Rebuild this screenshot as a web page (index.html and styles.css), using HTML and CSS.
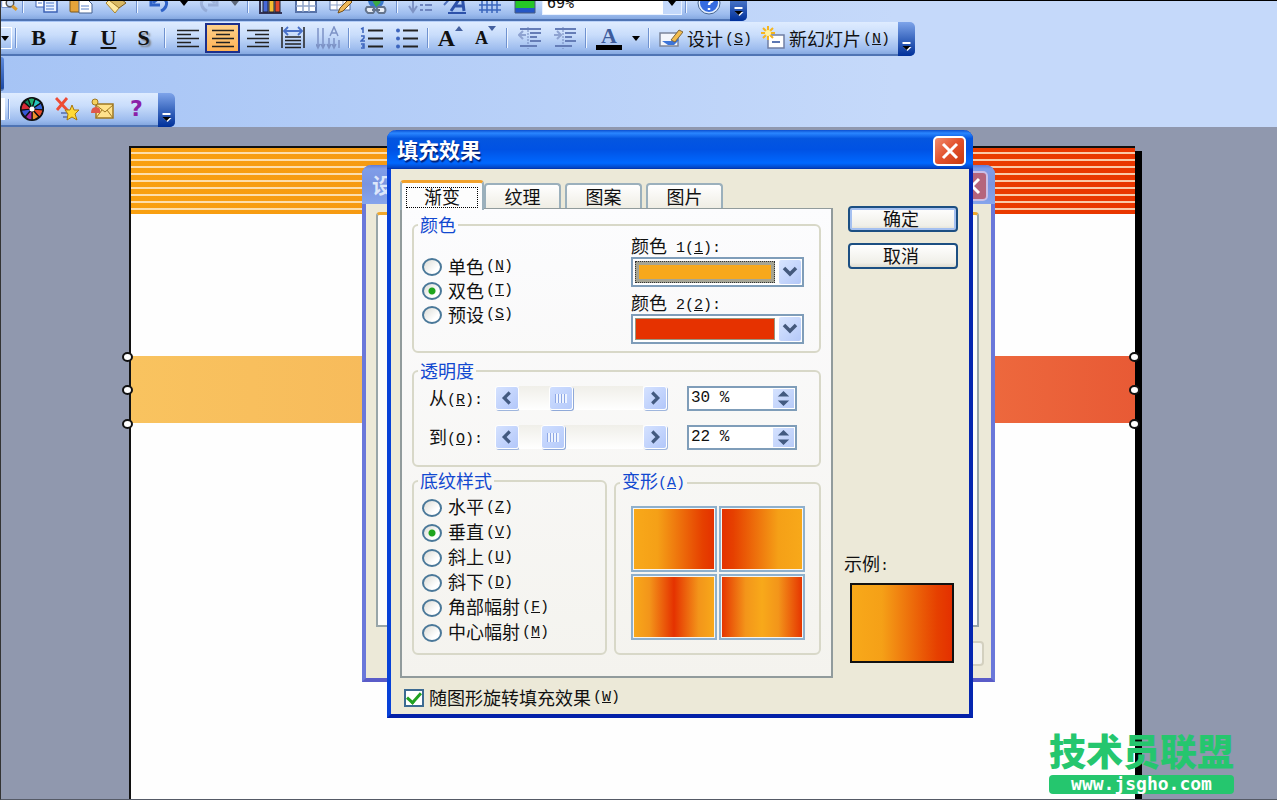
FILE: index.html
```html
<!DOCTYPE html>
<html lang="zh-CN">
<head>
<meta charset="utf-8">
<title>填充效果</title>
<link rel="stylesheet" href="styles.css">
</head>
<body>
<div class="app">
<header class="dock">
  <div class="toolbar toolbar-first">
    <button class="tool tool-short" aria-label="查找"><svg viewBox="0 0 24 24"><rect x="1" y="2" width="12" height="16" fill="#fff" stroke="#5a7cc0"/><circle cx="12" cy="12" r="5" fill="#cfe0fa" stroke="#555" stroke-width="2"/><path d="M15 16l6 5" stroke="#d99a2b" stroke-width="4"/></svg></button>
    <span class="sep"></span>
    <button class="tool" aria-label="复制"><svg viewBox="0 0 24 24"><path d="M2 2h12v14H2z" fill="#fff" stroke="#3d62b5"/><path d="M10 6h9l4 4v11H10z" fill="#e8f1ff" stroke="#3d62b5" stroke-width="1.5"/><path d="M12 12h8M12 15h8M12 18h8M4 12h4" stroke="#4a78cf"/></svg></button>
    <button class="tool" aria-label="粘贴"><svg viewBox="0 0 24 24"><rect x="1" y="2" width="17" height="19" rx="1" fill="#e6a43a" stroke="#7c5716"/><path d="M10 9h9l4 4v9H10z" fill="#fff" stroke="#45608f"/><path d="M12 15h8M12 18h8" stroke="#5d83c9"/></svg></button>
    <button class="tool" aria-label="格式刷"><svg viewBox="0 0 24 24"><path d="M11 3L22 12 15 17 4 9z" fill="#d9b965" stroke="#7c5d21"/><path d="M2 12l3-3 10 8-4 5z" fill="#ffe9a0" stroke="#a8832f"/></svg></button>
    <span class="sep"></span>
    <button class="tool" aria-label="撤消"><svg viewBox="0 0 24 24"><path d="M3 4v10h9" fill="none" stroke="#2f62c7" stroke-width="3"/><path d="M5 12C12 4 21 8 18 15q-1 3-5 5" fill="none" stroke="#2f62c7" stroke-width="3"/></svg></button>
    <button class="tool-arrow" aria-label="撤消列表"><svg viewBox="0 0 8 5"><path d="M0 0h8L4 5z"/></svg></button>
    <button class="tool faded" aria-label="恢复"><svg viewBox="0 0 24 24"><path d="M20 4v10h-9" fill="none" stroke="#7f92bd" stroke-width="3"/><path d="M18 12C11 4 2 8 5 15q1 3 5 5" fill="none" stroke="#7f92bd" stroke-width="3"/></svg></button>
    <button class="tool-arrow faded wide" aria-label="恢复列表"><svg viewBox="0 0 8 5"><path d="M0 0h8L4 5z"/></svg></button>
    <span class="sep"></span>
    <button class="tool" aria-label="图表"><svg viewBox="0 0 24 24"><path d="M1 1v21h22" fill="none" stroke="#335" stroke-width="2"/><path d="M4 9h5v12H4z" fill="#4668d8" stroke="#223"/><path d="M10 4h5v17h-5z" fill="#f5bf32" stroke="#223"/><path d="M16 8h5v13h-5z" fill="#e34a2b" stroke="#223"/></svg></button>
    <button class="tool" aria-label="表格"><svg viewBox="0 0 24 24"><path d="M2 3h20v18H2z" fill="#fff" stroke="#5772a8" stroke-width="2"/><path d="M2 9h20M2 15h20M9 3v18M15 3v18" stroke="#8fa3c8" stroke-width="1.5"/></svg></button>
    <button class="tool" aria-label="绘制表格"><svg viewBox="0 0 24 24"><path d="M1 2h20v17H1z" fill="#fff" stroke="#5772a8"/><path d="M1 9h20M1 14h20M8 2v17M14 2v17" stroke="#8fa3c8"/><path d="M9 22l2-5L20 8l3 3-9 9z" fill="#eeb95a" stroke="#775018"/></svg></button>
    <button class="tool" aria-label="超链接"><svg viewBox="0 0 24 24"><circle cx="12" cy="9" r="8" fill="#3a78ca"/><path d="M7 4q6-1 6 4l4 3-5 5-3-5z" fill="#3dab45"/><path d="M3 16h6q3 3 0 6H4q-4-3-1-6zm11 0h6q3 3 0 6h-5q-4-3-1-6z" fill="#e8edf5" stroke="#64748c" stroke-width="2"/><path d="M8 19h8" stroke="#64748c" stroke-width="2"/></svg></button>
    <span class="sep"></span>
    <button class="tool" aria-label="全部展开"><svg viewBox="0 0 24 24"><path d="M5 2v18M1 15l4 6 4-6" fill="none" stroke="#7e93c4" stroke-width="2"/><path d="M12 9h3m2 0h7M12 14h3m2 0h7M12 19h3m2 0h7" stroke="#6f86bf" stroke-width="2"/></svg></button>
    <button class="tool" aria-label="显示格式"><svg viewBox="0 0 24 24"><path d="M1 14L11 3" stroke="#5172bc" stroke-width="2"/><path d="M8 20L19 4l2 16M12 15h9" fill="none" stroke="#2d52aa" stroke-width="3"/><path d="M5 22h18" stroke="#2d52aa" stroke-width="2"/></svg></button>
    <button class="tool" aria-label="网格"><svg viewBox="0 0 24 24"><path d="M1 4h22M1 9h22M1 14h22M1 19h22M4 1v21M9 1v21M14 1v21M19 1v21" stroke="#3b66bd" stroke-width="1.5"/></svg></button>
    <button class="tool" aria-label="颜色"><svg viewBox="0 0 24 24"><path d="M2 1h20v9H2z" fill="#e02e20"/><path d="M2 8h20v9H2z" fill="#26c626"/><path d="M2 17h20v5H2z" fill="#2556c5"/><path d="M2 1h20v21H2z" fill="none" stroke="#475b80"/></svg></button>
    <div class="zoom"><input class="zoom-input" type="text" value="69%" aria-label="显示比例"><button class="zoom-arrow" aria-label="显示比例列表"><svg viewBox="0 0 8 5"><path d="M0 0h8L4 5z"/></svg></button></div>
    <span class="sep"></span>
    <button class="tool" aria-label="帮助"><svg viewBox="0 0 24 24"><circle cx="12" cy="12" r="10" fill="#356be0" stroke="#e4efff" stroke-width="2"/><circle cx="12" cy="12" r="11" fill="none" stroke="#47658f"/><path d="M8.500 9q0-4 4-4t3.500 3q0 2-2 3t-2 3m0 3v2" fill="none" stroke="#fff" stroke-width="2.500"/></svg></button>
    <button class="grip" aria-label="工具栏选项"><svg viewBox="0 0 10 9"><path d="M1 1h8" stroke="#fff" stroke-width="2"/><path d="M2 5h8L6 9z" fill="#fff"/><path d="M1 4h8L5 8z"/></svg></button>
  </div>

  <div class="toolbar">
    <button class="font-arrow" aria-label="字号列表"><svg viewBox="0 0 8 5"><path d="M0 0h8L4 5z"/></svg></button>
    <span class="sep"></span>
    <button class="tool letter bold">B</button>
    <button class="tool letter italic">I</button>
    <button class="tool letter underline">U</button>
    <button class="tool letter shadow">S</button>
    <span class="sep"></span>
    <button class="tool" aria-label="左对齐"><svg viewBox="0 0 24 24"><path d="M1 4.500h22M1 8.500h14M1 12.500h22M1 16.500h14M1 20.500h22" stroke="#222" stroke-width="1.500"/></svg></button>
    <button class="tool pressed" aria-label="居中"><svg viewBox="0 0 24 24"><path d="M1 4.500h22M5 8.500h14M1 12.500h22M5 16.500h14M1 20.500h22" stroke="#222" stroke-width="1.500"/></svg></button>
    <button class="tool" aria-label="右对齐"><svg viewBox="0 0 24 24"><path d="M1 4.500h22M9 8.500h14M1 12.500h22M9 16.500h14M1 20.500h22" stroke="#222" stroke-width="1.500"/></svg></button>
    <button class="tool" aria-label="分散对齐"><svg viewBox="0 0 24 24"><path d="M1 1v21M23 1v21M4 11h16M4 14.500h16M4 18h16M4 21.500h16" stroke="#222" stroke-width="1.500"/><path d="M3 5h18M7 1L3 5l4 4M17 1l4 4-4 4" fill="none" stroke="#4870c8" stroke-width="1.800"/></svg></button>
    <button class="tool" aria-label="文字方向"><svg viewBox="0 0 24 24"><path d="M2 2v20M7 2v20M13 12v10M18 12v10M23 14v8M0 18l2 4 2-4M5 18l2 4 2-4M11 18l2 4 2-4M16 18l2 4 2-4M14 10l4-9 4 9M15 7h6" fill="none" stroke="#7d93c6" stroke-width="1.500"/></svg></button>
    <span class="sep"></span>
    <button class="tool" aria-label="编号"><svg viewBox="0 0 24 24"><path d="M8 4.500h15M8 12.500h15M8 20.500h15" stroke="#222" stroke-width="1.800"/><path d="M1 3l2-1v5M1 10h3v2l-3 3h4M1 18h3v4H1M2 20h2" fill="none" stroke="#3c64bd" stroke-width="1.500"/></svg></button>
    <button class="tool" aria-label="项目符号"><svg viewBox="0 0 24 24"><path d="M8 4.500h15M8 12.500h15M8 20.500h15" stroke="#222" stroke-width="1.800"/><g fill="#3c64bd"><circle cx="3" cy="4.500" r="2"/><circle cx="3" cy="12.500" r="2"/><circle cx="3" cy="20.500" r="2"/></g></svg></button>
    <span class="sep"></span>
    <button class="tool letter grow">A<svg class="mark" viewBox="0 0 8 5"><path d="M0 5h8L4 0z"/></svg></button>
    <button class="tool letter shrink">A<svg class="mark" viewBox="0 0 8 5"><path d="M0 0h8L4 5z"/></svg></button>
    <span class="sep"></span>
    <button class="tool" aria-label="减少缩进"><svg viewBox="0 0 24 24"><path d="M10 1v22" stroke="#7288bd" stroke-dasharray="2 1"/><path d="M2 3h21M12 7h11M12 11h7M12 15h11M2 20h17" stroke="#657db7" stroke-width="2"/><path d="M8 9H1m4-4L1 9l4 4" fill="none" stroke="#8fa3d1" stroke-width="2"/></svg></button>
    <button class="tool" aria-label="增加缩进"><svg viewBox="0 0 24 24"><path d="M10 1v22" stroke="#7288bd" stroke-dasharray="2 1"/><path d="M2 3h21M12 7h11M12 11h7M12 15h11M2 20h17" stroke="#657db7" stroke-width="2"/><path d="M1 9h7M4 5l4 4-4 4" fill="none" stroke="#8fa3d1" stroke-width="2"/></svg></button>
    <span class="sep"></span>
    <button class="tool letter color">A</button>
    <button class="tool-arrow wide" aria-label="字体颜色列表"><svg viewBox="0 0 8 5"><path d="M0 0h8L4 5z"/></svg></button>
    <span class="sep"></span>
    <button class="command"><svg viewBox="0 0 24 24"><path d="M1 7h18v13H1z" fill="#f4f6fb" stroke="#7c859b" stroke-width="1.500"/><path d="M3 15h10l4-3 3 2-5 5H9z" fill="#3c74d8"/><path d="M12 14L20 4l4 2-8 10z" fill="#f3bd4e" stroke="#7b6540"/></svg>设计<span class="key">(<u>S</u>)</span></button>
    <button class="command"><svg viewBox="0 0 24 24"><path d="M7 9h16v13H7z" fill="#fff" stroke="#707fa4" stroke-width="1.500"/><path d="M11 16h8" stroke="#5c77b3" stroke-width="2"/><path d="M7 0v14M0 7h14M2 2l10 10M12 2L2 12" stroke="#f5b51e" stroke-width="2"/><circle cx="7" cy="7" r="3" fill="#fff2a3"/></svg>新幻灯片<span class="key">(<u>N</u>)</span></button>
    <button class="grip" aria-label="工具栏选项"><svg viewBox="0 0 10 9"><path d="M1 1h8" stroke="#fff" stroke-width="2"/><path d="M2 5h8L6 9z" fill="#fff"/><path d="M1 4h8L5 8z"/></svg></button>
  </div>

  <div class="toolbar stub"></div>

  <div class="toolbar toolbar-last">
    <span class="stub-field"></span>
    <span class="sep"></span>
    <button class="tool" aria-label="彩色轮"><svg viewBox="0 0 24 24"><circle cx="12" cy="12" r="12" fill="#111"/><g stroke="#111" stroke-width="1.200"><path d="M12 12L8 2q4-2 7 0z" fill="#20b070"/><path d="M12 12l3-10q4 1 6 4z" fill="#25c5c0"/><path d="M12 12l9-6q2 4 2 7z" fill="#3566d8"/><path d="M12 12l11 1q-1 5-4 7z" fill="#e84b28"/><path d="M12 12l7 8q-4 3-7 3z" fill="#f0912c"/><path d="M12 12v11q-4 0-7-3z" fill="#a428a0"/><path d="M12 12l-7 8q-3-3-4-7z" fill="#3658d6"/><path d="M12 12L1 13q0-5 3-8z" fill="#d72b35"/><path d="M12 12L4 5l4-3z" fill="#118c60"/></g><circle cx="12" cy="12" r="2.500" fill="#fff"/></svg></button>
    <button class="tool" aria-label="删除收藏"><svg viewBox="0 0 24 24"><path d="M1 1l12 13M12 1L2 13" stroke="#ed4b35" stroke-width="2.800"/><path d="M6 16h7M8 20h5" stroke="#6b84bd" stroke-width="2"/><path d="M17 8l2 5h5l-4 4 2 6-5-3-5 3 1-6-3-4h5z" fill="#ffda38" stroke="#a8780d"/></svg></button>
    <button class="tool" aria-label="邮件"><svg viewBox="0 0 24 24"><path d="M6 7h17v14H6z" fill="#ffe28c" stroke="#a07821" stroke-width="1.500"/><path d="M6 8l9 7 8-7M6 21l6-8M23 21l-6-8" fill="none" stroke="#a07821"/><circle cx="5" cy="5" r="3" fill="#f5d15d" stroke="#a07821"/><path d="M1 16q0-6 5-6t4 6z" fill="#df584b"/></svg></button>
    <button class="tool help">?</button>
    <button class="grip" aria-label="工具栏选项"><svg viewBox="0 0 10 9"><path d="M1 1h8" stroke="#fff" stroke-width="2"/><path d="M2 5h8L6 9z" fill="#fff"/><path d="M1 4h8L5 8z"/></svg></button>
  </div>
</header>

<main class="workspace">
  <section class="slide">
    <div class="stripes"></div>
    <div class="band">
      <i class="handle left top"></i><i class="handle left middle"></i><i class="handle left bottom"></i>
      <i class="handle right top"></i><i class="handle right middle"></i><i class="handle right bottom"></i>
    </div>
  </section>

  <section class="window back">
    <div class="titlebar"><h2 class="title">设</h2><button class="close" aria-label="关闭"><svg viewBox="0 0 20 20"><path d="M3 3l14 14M17 3L3 17"/></svg></button></div>
    <div class="back-body"><div class="back-panel"></div><div class="back-foot"><button class="back-button" aria-label="预览"></button></div></div>
  </section>

  <section class="window front">
    <div class="titlebar"><h1 class="title">填充效果</h1><button class="close" aria-label="关闭"><svg viewBox="0 0 20 20"><path d="M3 3l14 14M17 3L3 17"/></svg></button></div>
    <form class="body">
      <div class="main">
        <div class="tabs" role="tablist">
          <button type="button" class="tab active" role="tab"><span>渐变</span></button>
          <button type="button" class="tab" role="tab">纹理</button>
          <button type="button" class="tab" role="tab">图案</button>
          <button type="button" class="tab" role="tab">图片</button>
        </div>
        <div class="panel">
          <fieldset class="group colors">
            <legend>颜色</legend>
            <div class="choices">
              <label class="choice"><input type="radio" name="mode">单色<span class="key">(<u>N</u>)</span></label>
              <label class="choice"><input type="radio" name="mode" checked>双色<span class="key">(<u>T</u>)</span></label>
              <label class="choice"><input type="radio" name="mode">预设<span class="key">(<u>S</u>)</span></label>
            </div>
            <div class="pickers">
              <label for="color1">颜色<span class="key"> 1(<u>1</u>):</span></label>
              <div class="combo"><select id="color1" class="swatch amber focused"><option></option></select><svg class="chevron" viewBox="0 0 22 24"><path d="M5 8l6 6 6-6"/></svg></div>
              <label for="color2">颜色<span class="key"> 2(<u>2</u>):</span></label>
              <div class="combo"><select id="color2" class="swatch red"><option></option></select><svg class="chevron" viewBox="0 0 22 24"><path d="M5 8l6 6 6-6"/></svg></div>
            </div>
          </fieldset>

          <fieldset class="group alpha">
            <legend>透明度</legend>
            <div class="alpha-row">
              <label for="from">从<span class="key">(<u>R</u>):</span></label>
              <div class="scroll">
                <button type="button" class="step" aria-label="减少"><svg viewBox="0 0 24 24"><path d="M15 6l-6 6 6 6"/></svg></button>
                <input id="from" type="range" value="30">
                <button type="button" class="step" aria-label="增加"><svg viewBox="0 0 24 24"><path d="M9 6l6 6-6 6"/></svg></button>
              </div>
              <div class="spin"><input type="text" value="30 %" aria-label="从"><button type="button" aria-label="调整"><svg viewBox="0 0 22 20"><path d="M5 8l6-6 6 6zM5 12l6 6 6-6z"/></svg></button></div>
            </div>
            <div class="alpha-row">
              <label for="to">到<span class="key">(<u>O</u>):</span></label>
              <div class="scroll">
                <button type="button" class="step" aria-label="减少"><svg viewBox="0 0 24 24"><path d="M15 6l-6 6 6 6"/></svg></button>
                <input id="to" type="range" value="22">
                <button type="button" class="step" aria-label="增加"><svg viewBox="0 0 24 24"><path d="M9 6l6 6-6 6"/></svg></button>
              </div>
              <div class="spin"><input type="text" value="22 %" aria-label="到"><button type="button" aria-label="调整"><svg viewBox="0 0 22 20"><path d="M5 8l6-6 6 6zM5 12l6 6 6-6z"/></svg></button></div>
            </div>
          </fieldset>

          <div class="pair">
            <fieldset class="group styles">
              <legend>底纹样式</legend>
              <label class="choice"><input type="radio" name="style">水平<span class="key">(<u>Z</u>)</span></label>
              <label class="choice"><input type="radio" name="style" checked>垂直<span class="key">(<u>V</u>)</span></label>
              <label class="choice"><input type="radio" name="style">斜上<span class="key">(<u>U</u>)</span></label>
              <label class="choice"><input type="radio" name="style">斜下<span class="key">(<u>D</u>)</span></label>
              <label class="choice"><input type="radio" name="style">角部幅射<span class="key">(<u>F</u>)</span></label>
              <label class="choice"><input type="radio" name="style">中心幅射<span class="key">(<u>M</u>)</span></label>
            </fieldset>
            <fieldset class="group variants">
              <legend>变形<span class="key">(<u>A</u>)</span></legend>
              <div class="variant-grid">
                <button type="button" class="variant forward" aria-label="变形一"></button>
                <button type="button" class="variant backward" aria-label="变形二"></button>
                <button type="button" class="variant inner" aria-label="变形三"></button>
                <button type="button" class="variant outer" aria-label="变形四"></button>
              </div>
            </fieldset>
          </div>
        </div>
        <label class="rotate"><input type="checkbox" checked>随图形旋转填充效果<span class="key">(<u>W</u>)</span></label>
      </div>
      <aside class="side">
        <button type="button" class="push primary">确定</button>
        <button type="button" class="push">取消</button>
        <div class="sample"><span>示例<span class="key">:</span></span><div class="sample-box"></div></div>
      </aside>
    </form>
  </section>

  <div class="brand"><strong>技术员联盟</strong><span>www.jsgho.com</span></div>
</main>
</div>
</body>
</html>
```
FILE: styles.css
```css
* { box-sizing: border-box; }
body { margin: 0; font: 18px/20px "Noto Sans CJK SC", sans-serif; color: #111; }
button, input, select { font: inherit; color: inherit; margin: 0; padding: 0; border: 0; background: none; border-radius: 0; }
.app { min-height: 100vh; display: flex; flex-direction: column; overflow: hidden; border-top: 1px solid #000; border-left: 1px solid #333; border-bottom: 1px solid #555a66; }
.key { font-family: "Liberation Mono", monospace; font-size: 15px; line-height: 16px; vertical-align: 1px; white-space: pre; }

/* toolbars */
.dock { display: flex; flex-direction: column; align-items: flex-start; gap: 1px; overflow: hidden; background: linear-gradient(90deg, #a6c4f5, #c5d9fa 70%); }
.toolbar { display: flex; align-items: center; height: 34px; background: linear-gradient(#dfecff, #c9ddfb 40%, #9dbcee 85%, #85a8e0); border-bottom: 2px solid #4f74b4; border-radius: 0 5px 5px 0; }
.toolbar-first { margin-top: -14px; }
.toolbar-last { margin-top: 1px; }
.toolbar svg { width: 24px; height: 24px; display: block; }
.tool { width: 35px; height: 30px; display: flex; align-items: center; justify-content: center; flex: none; }
.tool-short { width: 18px; }
.pressed { background: linear-gradient(#ffd18b, #ffb255); border: 2px solid #1c2f8c; }
.sep { width: 2px; height: 20px; margin: 0 4px 0 3px; background: linear-gradient(90deg, #6f92d0 50%, #eef5ff 50%); }
.tool-arrow { width: 14px; display: flex; justify-content: center; }
.tool-arrow.wide { width: 18px; }
.toolbar .tool-arrow svg, .toolbar .zoom-arrow svg, .toolbar .font-arrow svg { width: 8px; height: 5px; }
.faded { opacity: .5; }
.zoom { display: flex; width: 140px; height: 24px; background: #fff; border: 1px solid #e8f1ff; }
.zoom-input { flex: 1; min-width: 0; padding-left: 4px; font-family: "DejaVu Sans Mono", monospace; font-size: 15px; }
.zoom-arrow { width: 18px; background: #c3d8fa; display: flex; align-items: center; justify-content: center; }
.font-arrow { width: 11px; height: 22px; border: 1px solid #fff; border-left: 0; display: flex; align-items: center; }
.letter { font: bold 22px/24px "Liberation Serif", serif; color: #111; }
.italic { font-style: italic; }
.underline { text-decoration: underline; }
.shadow { text-shadow: 2px 2px 2px #777; }
.grow { font-size: 24px; }
.shrink { font-size: 18px; }
.toolbar .mark { width: 8px; height: 5px; fill: #44609f; align-self: flex-start; margin-top: 3px; }
.color { height: 24px; width: 26px; margin: 0 5px; color: #3d5c9c; border-bottom: 5px solid #000; line-height: 18px; }
.command { display: flex; align-items: center; margin: 0 4px 0 5px; white-space: nowrap; }
.command svg { margin-right: 4px; }
.help { font: bold 22px/28px "DejaVu Sans", sans-serif; color: #8b20a8; }
.grip { align-self: stretch; width: 17px; margin: 0 0 -2px 4px; display: flex; align-items: flex-end; justify-content: center; padding-bottom: 5px; background: linear-gradient(#7ea4ea, #3b68bf 50%, #00309a); border-radius: 0 5px 5px 0; }
.toolbar .grip svg { width: 11px; height: 9px; }
.stub { width: 3px; background: linear-gradient(#5f8bdc, #1b49a5); }
.stub-field { width: 4px; height: 22px; background: #fff; }

/* slide */
.workspace { flex: 1; position: relative; display: flex; background: #9098ae; }
.slide { flex: 1; min-height: 652px; margin: 19px 142px 0 128px; border-top: 2px solid #111; border-left: 2px solid #111; background: #fefefe; box-shadow: 7px 5px 0 #000; display: flex; flex-direction: column; gap: 142px; }
.stripes { height: 66px; background: repeating-linear-gradient(transparent 0 4px, rgba(255,238,210,.8) 4px 6px, transparent 6px 7px), linear-gradient(90deg, #f9a010, #f69a12 25%, #ea3c00 85%, #e93600); }
.band { position: relative; height: 67px; background: linear-gradient(90deg, #f9c35f, #f7bb5b 24%, #ed683d 86%, #e85a35); }
.handle { position: absolute; width: 11px; height: 10px; border: 2px solid #111; border-radius: 50%; background: #fff; }
.handle.left { left: -9px; }
.handle.right { right: -5px; }
.handle.top { top: -4px; }
.handle.middle { top: 29px; }
.handle.bottom { top: 63px; }

/* windows */
.window { position: absolute; display: flex; flex-direction: column; border-radius: 9px 9px 0 0; }
.titlebar { display: flex; align-items: center; justify-content: space-between; height: 39px; margin: 0 -4px; padding: 2px 7px 0 10px; border-radius: 9px 9px 0 0; }
.title { margin: 0; padding-bottom: 4px; font-size: 21px; line-height: 28px; font-weight: 700; color: #fff; }
.close { width: 33px; height: 30px; display: flex; align-items: center; justify-content: center; border: 2px solid #fff; border-radius: 5px; background: linear-gradient(135deg, #f08d70, #e2512c 50%, #c83a10); }
.close svg { width: 20px; height: 20px; stroke: #fff; stroke-width: 3; }
.front { left: 386px; top: 3px; width: 586px; border: 4px solid #0741d8; border-top: 0; border-right-color: #0526b0; border-bottom-color: #0320a8; background: #ece9d8; }
.front .titlebar { background: linear-gradient(#0b4fd0, #2a86ff 8%, #0456e0 22%, #0052e4 50%, #0068ff 85%, #0347c8 96%, #0030a8); }
.front .title { text-shadow: 1px 2px 1px #00227a; }
.back { left: 361px; top: 38px; width: 633px; height: 517px; border: 4px solid #6a78da; border-top: 0; border-bottom-color: #5a5cc8; background: #ece9d8; }
.back .titlebar { background: linear-gradient(#5f7bd8, #7f9de8 10%, #7a94e0 50%, #86a5ec); }
.back .title { color: #dce6fa; }
.back .close { background: #b5657c; border-color: #cbbfe6; }
.back-body { flex: 1; display: flex; flex-direction: column; padding: 8px 12px 9px 10px; }
.back-panel { flex: 1; background: #fcfcfb; border: 2px solid #98a5a8; border-top: 3px solid #f0a82c; border-radius: 4px 4px 0 0; }
.back-foot { height: 42px; display: flex; justify-content: flex-end; align-items: flex-end; }
.back-button { width: 90px; height: 25px; margin: 0 -5px 3px 0; background: #f4f3ec; border: 2px solid #d3d0bf; border-radius: 4px; }

.body { display: flex; gap: 15px; padding: 11px 11px 4px 9px; }
.main { flex: 1; min-width: 0; }
.tabs { display: flex; align-items: flex-end; gap: 4px; }
.tab { flex: none; width: 77px; height: 25px; margin-top: 3px; border: 2px solid #9bb0bc; border-bottom: 0; border-radius: 4px 4px 0 0; background: linear-gradient(#fff, #efede4); line-height: 20px; padding-bottom: 2px; }
.tab.active { width: 84px; height: 30px; margin: 0 -4px -2px 0; padding: 1px 4px 0; border-top: 3px solid #f2a12a; background: #fdfdfd; position: relative; z-index: 1; }
.tab.active span { display: block; height: 21px; line-height: 16px; border: 1px dotted #000; }
.panel { padding: 6px 10px 21px 10px; border: 2px solid #919b9c; border-top-width: 1px; background: linear-gradient(#fcfcfe, #f4f3ee); display: flex; flex-direction: column; }
.group { margin: 0; min-width: 0; border: 2px solid #d8d8c8; border-radius: 6px; }
.group legend { margin-left: -4px; padding: 0 2px 2px; line-height: 18px; color: #1148d0; }
.colors { display: flex; justify-content: space-between; padding: 0 15px 7px 8px; margin-bottom: 8px; }
.choices { padding-top: 20px; }
.choice { display: flex; align-items: center; height: 25px; padding-bottom: 3px; white-space: nowrap; }
.choice .key, .rotate .key, .command .key { margin: 3px 0 0 2px; }
.choices .choice { height: 24px; }
input[type="radio"] { appearance: none; width: 20px; height: 18px; margin: 3px 6px 0 0; border: 2px solid #4a7899; border-radius: 50%; background: linear-gradient(135deg, #dcdcd6, #fff 70%); }
input[type="radio"]:checked { background: radial-gradient(circle, #1fa51f 0 3px, transparent 4px), linear-gradient(135deg, #dcdcd6, #fff 70%); }
.pickers { width: 173px; display: flex; flex-direction: column; }
.pickers label { height: 22px; line-height: 20px; }
.pickers .combo + label { margin-top: 5px; }
.combo { position: relative; height: 30px; border: 2px solid #7f9db9; background: #fff; padding: 2px 27px 2px 2px; }
.swatch { appearance: none; display: block; width: 100%; height: 22px; border: 1px solid #999780; }
.amber { background: #f7a81b; }
.red { background: #e63200; }
.focused { border: 4px solid #a5a493; outline: 1px dotted #333; outline-offset: -1px; }
.chevron { position: absolute; right: 1px; top: 1px; width: 22px; height: 24px; border-radius: 2px; background: linear-gradient(135deg, #d8e5ff, #b4c8f8); fill: none; stroke: #44597c; stroke-width: 3.5; pointer-events: none; }
.alpha { padding: 4px 22px 15px 15px; margin-bottom: 4px; display: flex; flex-direction: column; gap: 13px; }
.alpha legend, .variants legend { margin-left: -11px; }
.alpha-row { display: flex; align-items: center; height: 26px; }
.alpha-row label { width: 66px; white-space: nowrap; }
.scroll { display: flex; width: 172px; height: 24px; }
.step { flex: none; width: 24px; height: 24px; border: 1px solid #fff; border-radius: 3px; background: linear-gradient(135deg, #d5e2ff, #b2c7fa); box-shadow: 1px 1px 0 #9fb6dd; }
.step svg { display: block; width: 22px; height: 22px; fill: none; stroke: #435a80; stroke-width: 3.5; }
.scroll input { appearance: none; flex: 1; min-width: 0; height: 24px; background: linear-gradient(#f0efe9, #fff); }
.scroll input::-webkit-slider-thumb { appearance: none; width: 24px; height: 24px; border: 1px solid #fff; border-radius: 3px; box-shadow: 1px 1px 0 #8fa9d8; background: repeating-linear-gradient(90deg, #8ea8e6 0 1px, #eef4ff 1px 3px) 50% 50% / 12px 9px no-repeat, linear-gradient(135deg, #cfdeff, #b5cafa); }
.spin { display: flex; width: 110px; height: 25px; margin-left: auto; border: 2px solid #7f9db9; background: #fff; }
.spin input { flex: 1; min-width: 0; padding-left: 2px; font-family: "Liberation Mono", monospace; font-size: 16px; }
.spin button { width: 23px; background: linear-gradient(135deg, #d5e2ff, #b8cbf8); border: 1px solid #fff; }
.spin svg { display: block; width: 21px; height: 19px; fill: #435a80; }
.pair { display: grid; grid-template-columns: 195px 1fr; gap: 7px; }
.styles { padding: 4px 8px 4px; }
.variants { padding: 12px 14px 13px 15px; }
.variant-grid { display: grid; grid-template-columns: 1fr 1fr; gap: 2px; }
.variant { height: 66px; border: 2px solid #8fb0cc; background-clip: content-box; padding: 1px; background-color: #fff; }
.forward { background-image: linear-gradient(90deg, #f8a91a, #f5a017 30%, #e64000 85%, #e43000); }
.backward { background-image: linear-gradient(270deg, #f8a91a, #f5a017 30%, #e64000 85%, #e43000); }
.inner { background-image: linear-gradient(90deg, #f8a91a, #f3951a 20%, #e53200 50%, #f3951a 80%, #f8a91a); }
.outer { background-image: linear-gradient(90deg, #e53200, #f3951a 30%, #f8a91a 50%, #f3951a 70%, #e53200); }
.rotate { display: flex; align-items: center; height: 24px; margin: 8px 0 0 4px; padding-bottom: 3px; white-space: nowrap; }
input[type="checkbox"] { appearance: none; width: 20px; height: 18px; margin: 3px 5px 0 0; border: 2px solid #3c6a92; background: #fff; display: grid; place-items: center; }
input[type="checkbox"]:checked::before { content: ""; width: 11px; height: 6px; border: solid #21a121; border-width: 0 0 3px 3px; rotate: -48deg; margin-bottom: 4px; }
.side { width: 110px; display: flex; flex-direction: column; gap: 11px; padding-top: 26px; }
.push { height: 26px; line-height: 20px; border: 2px solid #1c4f82; border-radius: 4px; background: linear-gradient(#fff, #f0efe8 80%, #dfdccf); padding: 0 4px 2px 0; }
.primary { box-shadow: inset 0 0 0 2px #a5c0f0; }
.sample { margin: auto 0 47px -4px; }
.sample-box { height: 80px; margin: 8px 4px 0 6px; border: 2px solid #111; background: linear-gradient(90deg, #f8a91a, #f5a017 30%, #e64000 85%, #e43000); }

/* site mark */
.brand { position: absolute; right: 43px; bottom: 5px; display: flex; flex-direction: column; gap: 5px; color: #25c66e; }
.brand strong { font-size: 37px; line-height: 40px; font-weight: 900; white-space: nowrap; }
.brand span { height: 19px; border-radius: 4px; background: #25c66e; color: #fff; text-align: center; font: bold 18px/18px "DejaVu Sans Mono", monospace; }
```
